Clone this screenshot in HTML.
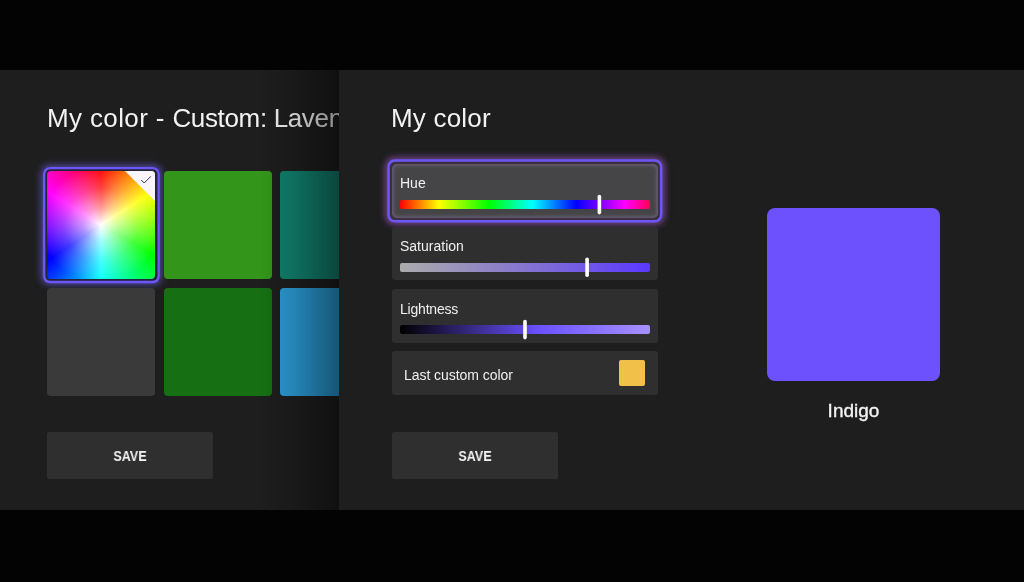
<!DOCTYPE html>
<html lang="en">
<head>
<meta charset="utf-8">
<title>My color</title>
<style>
html,body{margin:0;padding:0;}
body{width:1024px;height:582px;background:#030303;overflow:hidden;position:relative;font-family:"Liberation Sans",sans-serif;color:#fff;}
.abs{position:absolute;}
.title,.lbl,.btn span,#indigo{will-change:transform;}
#left{left:0;top:70px;width:339px;height:440px;background:#1e1e1e;overflow:hidden;}
#right{left:339px;top:70px;width:685px;height:440px;background:#1e1e1e;overflow:hidden;}
#shade{left:259px;top:0;width:80px;height:440px;background:linear-gradient(to right,rgba(0,0,0,0) 0%,rgba(0,0,0,.12) 40%,rgba(0,0,0,.45) 100%);}
.title{font-size:26px;letter-spacing:.2px;line-height:30px;white-space:nowrap;color:#f2f2f2;transform-origin:0 0;}
.tile{width:108px;height:108px;border-radius:4px;}
.card{left:53px;width:266px;height:53.500px;background:#2f2f2f;border-radius:3px;}
.lbl{left:8px;font-size:14px;line-height:16px;white-space:nowrap;color:#f0f0f0;transform-origin:0 0;}
.bar{left:8px;width:249.600px;height:9px;border-radius:2px;}
.btn{width:166px;height:47px;background:#2f2f2f;border-radius:2px;}
.btn span{position:absolute;left:0;right:0;top:15.500px;transform:scaleX(.9);text-align:center;font-weight:bold;font-size:14px;line-height:16px;color:#f4f4f4;display:block;}
</style>
</head>
<body>
<div id="left" class="abs">
  <div class="abs title" id="t1" style="left:47px;top:33px;letter-spacing:-.35px;"><span style="letter-spacing:.37px;">My color - </span>Custom: Lavender</div>
  <!-- focus ring for tile 1 -->
  <div class="abs glow" style="left:43px;top:97px;width:117px;height:116px;border-radius:7px;box-shadow:0 0 7px 1.500px rgba(100,88,215,.7);"></div>
  <svg class="abs" style="left:0;top:0;" width="339" height="440" viewBox="0 0 339 440"><rect x="42.900" y="96.900" width="117" height="116.400" rx="7" fill="#6c56f6"/><rect x="45.350" y="99.350" width="112.100" height="111.500" rx="4.800" fill="#23263a"/></svg>
  <div class="abs tile" id="wheel" style="left:47.400px;top:101px;width:108px;height:108px;background:radial-gradient(circle at 50% 50%,rgba(255,255,255,1) 0%,rgba(255,255,255,.6) 22%,rgba(255,255,255,.25) 48%,rgba(255,255,255,0) 78%),conic-gradient(from 0deg at 50% 50%,#ff0000,#ffff00 57deg,#00ff00 120deg,#00ffff 180deg,#0000ff 236deg,#ff00ff 302deg,#ff0000 360deg);overflow:hidden;">
    <svg class="abs" style="right:0;top:0;" width="30" height="30" viewBox="0 0 30 30"><polygon points="0,0 30,0 30,30" fill="#f8f5ff"/><path d="M16.200 9 L19.200 12 L25.800 5.400" fill="none" stroke="#383838" stroke-width="1"/></svg>
  </div>
  <div class="abs tile" style="left:164px;top:101px;height:108px;background:#33961a;"></div>
  <div class="abs tile" style="left:280px;top:101px;height:108px;background:#11806d;"></div>
  <div class="abs tile" style="left:47.300px;top:218px;background:#3a3a3a;"></div>
  <div class="abs tile" style="left:164px;top:218px;background:#166f12;"></div>
  <div class="abs tile" style="left:280px;top:218px;background:#2a9ad4;"></div>
  <div class="abs btn" style="left:47.300px;top:362px;"><span>SAVE</span></div>
  <div class="abs" id="shade"></div>
</div>
<div id="right" class="abs">
  <div class="abs title" id="t2" style="left:52px;top:33px;">My color</div>

  <div class="abs glow" style="left:49px;top:90px;width:274px;height:62px;border-radius:7px;box-shadow:0 0 6px 2.500px rgba(160,88,200,.62);"></div>
  <svg class="abs" style="left:0;top:0;" width="685" height="440" viewBox="0 0 685 440"><rect x="48.300" y="89.200" width="275.100" height="63.300" rx="7.500" fill="#6c56f6"/><rect x="50.800" y="91.700" width="270.100" height="58.300" rx="5.200" fill="#3b2f40"/></svg>
  <div class="abs card" style="top:94px;height:54px;background:#454446;box-shadow:inset 0 0 4px 1px rgba(175,155,205,.42);border-radius:5px;">
    <div class="abs lbl" style="top:11px;">Hue</div>
    <div class="abs bar" style="top:36px;background:linear-gradient(to right,#ff0000 0%,#ffff00 15.500%,#00ff00 35.500%,#00ffff 53%,#0000ff 70.500%,#ff00ff 90%,#ff0055 100%);"></div>
    <svg class="abs" style="left:0;top:0;" width="266" height="54" viewBox="0 0 266 54"><rect x="205.600" y="30.800" width="3.600" height="19.600" rx="1.800" fill="#ffffff"/></svg>
  </div>
  <div class="abs card" style="top:156.500px;">
    <div class="abs lbl" style="top:11px;">Saturation</div>
    <div class="abs bar" style="top:36.500px;background:linear-gradient(to right,#ababab 0%,#8575cf 50%,#5a38ff 100%);"></div>
    <svg class="abs" style="left:0;top:0;" width="266" height="54" viewBox="0 0 266 54"><rect x="193.300" y="30.400" width="3.600" height="19.600" rx="1.800" fill="#ffffff"/></svg>
  </div>
  <div class="abs card" style="top:219px;">
    <div class="abs lbl" style="top:11.500px;left:8px;letter-spacing:-.2px;">Lightness</div>
    <div class="abs bar" style="top:36px;background:linear-gradient(to right,#000000 0%,#6a50ff 55%,#a791ff 100%);"></div>
    <svg class="abs" style="left:0;top:0;" width="266" height="54" viewBox="0 0 266 54"><rect x="131.200" y="30.800" width="3.600" height="19.600" rx="1.800" fill="#ffffff"/></svg>
  </div>
  <div class="abs card" style="top:281.200px;height:44px;">
    <div class="abs lbl" style="left:12px;top:15.500px;letter-spacing:-.05px;">Last custom color</div>
    <div class="abs" style="left:227px;top:8.800px;width:26.300px;height:26.300px;border-radius:2px;background:#f0c048;"></div>
  </div>
  <div class="abs btn" style="left:53px;top:362px;"><span>SAVE</span></div>

  <div class="abs" style="left:428px;top:137.500px;width:173px;height:173px;border-radius:8px;background:#6d51fc;"></div>
  <div class="abs" id="indigo" style="left:428px;width:173px;top:330px;text-align:center;font-size:19px;line-height:22px;color:#f4f4f4;-webkit-text-stroke:.35px #f4f4f4;">Indigo</div>
</div>
</body>
</html>
